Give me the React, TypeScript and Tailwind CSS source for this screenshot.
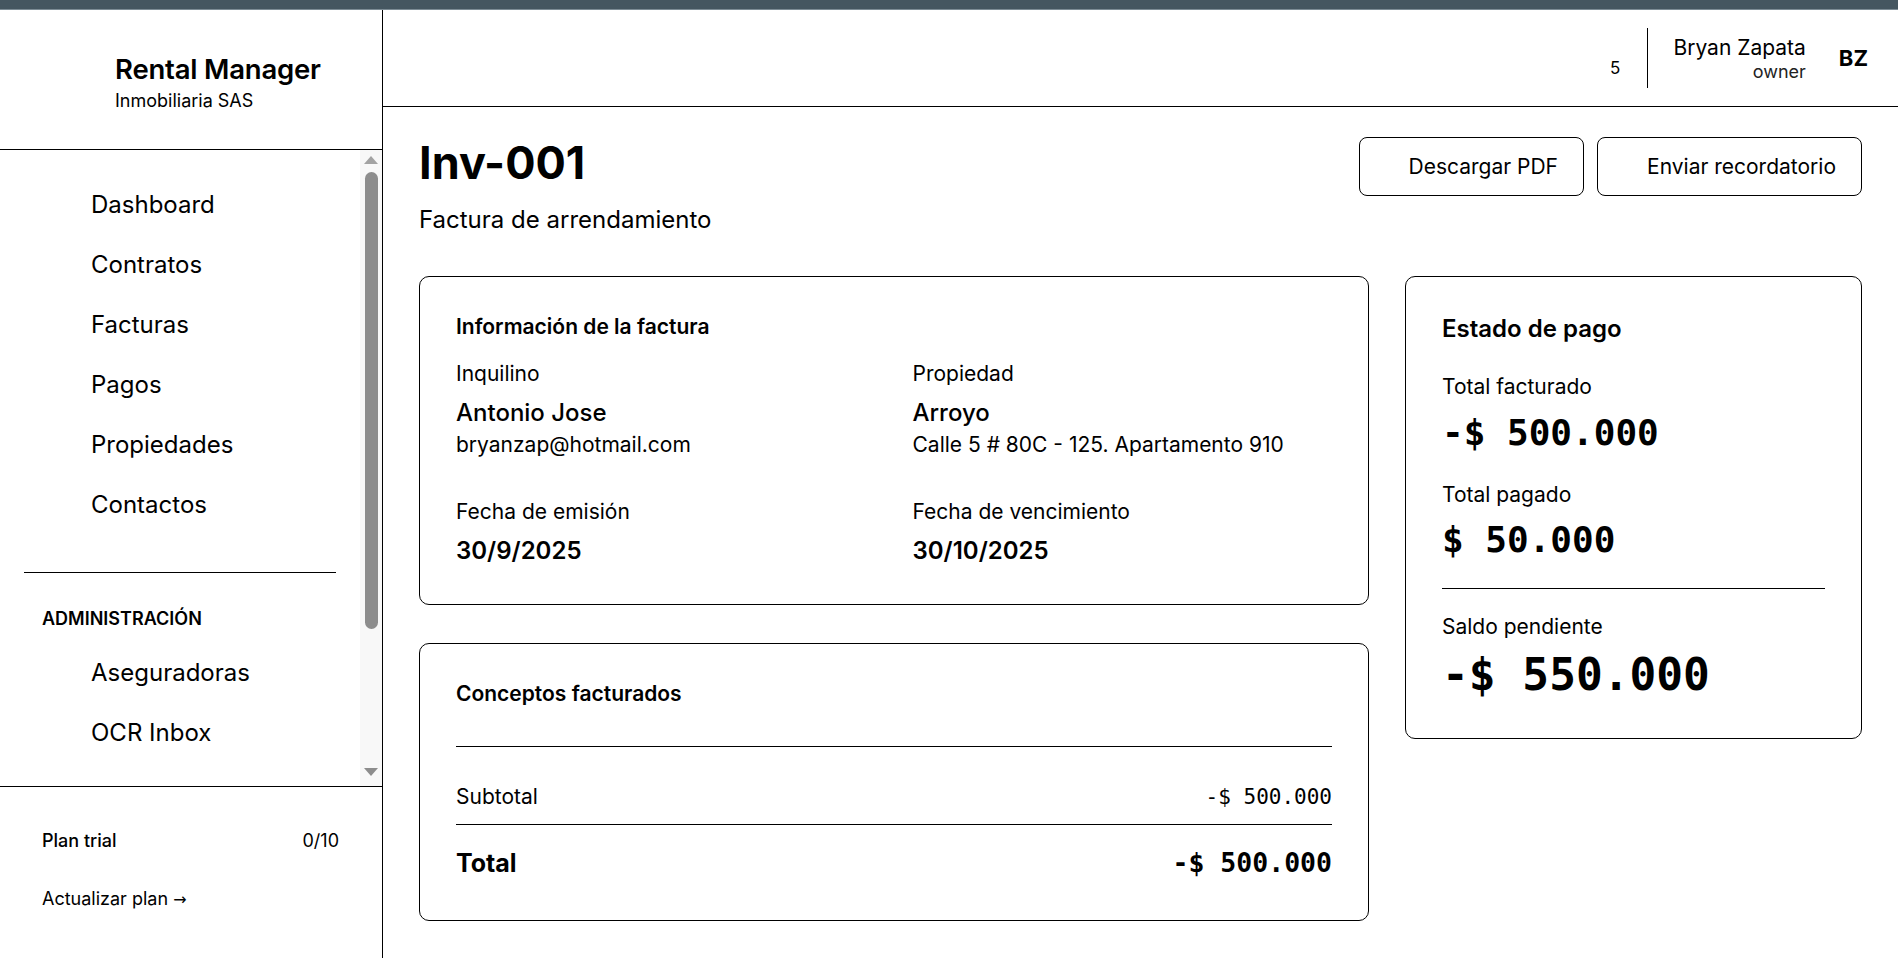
import React from 'react';

const navItems = ['Dashboard', 'Contratos', 'Facturas', 'Pagos', 'Propiedades', 'Contactos'];
const adminItems = ['Aseguradoras', 'OCR Inbox'];

const mono = "font-['DejaVu_Sans_Mono',monospace]";

const Sidebar: React.FC = () => {
  return (
    <aside className="w-[383px] shrink-0 border-r border-black flex flex-col">
      <div className="h-[140px] shrink-0 border-b border-black pl-[115px] pt-[41px]">
        <div className="text-[27.5px] font-semibold leading-[36px] tracking-[-0.2px]">Rental Manager</div>
        <div className="text-[18px] leading-[22px] mt-[3px]">Inmobiliaria SAS</div>
      </div>
      <div className="h-[637px] shrink-0 flex border-b border-black">
        <nav className="flex-1 pt-[25px]">
          {navItems.map((item) => (
            <a key={item} className="h-[60px] flex items-center pl-[91px] text-[24px]">
              {item}
            </a>
          ))}
          <div className="mx-[24px] mt-[37px] border-t border-black" />
          <div className="mt-[34px] pl-[42px] text-[18px] font-semibold leading-[24px]">ADMINISTRACIÓN</div>
          <div className="mt-[12px]">
            {adminItems.map((item) => (
              <a key={item} className="h-[60px] flex items-center pl-[91px] text-[24px]">
                {item}
              </a>
            ))}
          </div>
        </nav>
        {/* scrollbar */}
        <div className="w-[22px] bg-[#f8f8f8] flex flex-col items-center py-[6px]">
          <div className="w-0 h-0 border-l-[7px] border-r-[7px] border-b-[8px] border-l-transparent border-r-transparent border-b-[#a3a3a3]" />
          <div className="w-[13px] h-[457px] rounded-full bg-[#8d8d8d] mt-[8px]" />
          <div className="flex-1" />
          <div className="w-0 h-0 border-l-[7px] border-r-[7px] border-t-[8px] border-l-transparent border-r-transparent border-t-[#8d8d8d] mb-[4px]" />
        </div>
      </div>
      <div className="flex-1 px-[42px] pt-[42px] text-[18px]">
        <div className="flex justify-between leading-[24px]">
          <span className="font-medium">Plan trial</span>
          <span className="mr-[1px]">0/10</span>
        </div>
        <div className="mt-[34px] leading-[24px]">
          Actualizar plan <span className="font-['DejaVu_Sans',sans-serif] text-[16px]">→</span>
        </div>
      </div>
    </aside>
  );
};

const Header: React.FC = () => {
  return (
    <header className="h-[97px] shrink-0 border-b border-black flex items-center justify-end pr-[30px]">
      <span className="text-[17px] mt-[22px]">5</span>
      <div className="w-px h-[60px] bg-black ml-[27px] mr-[25px]" />
      <div className="text-right">
        <div className="text-[21px] leading-[27px]">Bryan Zapata</div>
        <div className="text-[18px] leading-[22px] text-[#222]">owner</div>
      </div>
      <div className="ml-[33px] text-[22px] font-bold">BZ</div>
    </header>
  );
};

const Label: React.FC<{ children: React.ReactNode }> = ({ children }) => (
  <div className="text-[21px] leading-[28px]">{children}</div>
);

const App: React.FC = () => {
  return (
    <div className="h-[958px] flex flex-col bg-white text-black font-['Inter',sans-serif] overflow-hidden">
      <div className="h-[10px] shrink-0 bg-[#455660] border-b border-[#7d8c95]" />
      <div className="flex flex-1 min-h-0">
        <Sidebar />
        <div className="flex-1 flex flex-col min-w-0">
          <Header />
          <main className="px-[36px] pt-[28px]">
            <div className="flex justify-between items-start">
              <div>
                <h1 className="text-[45px] font-bold leading-[56px]">Inv-001</h1>
                <p className="text-[24px] leading-[32px] mt-[13px]">Factura de arrendamiento</p>
              </div>
              <div className="flex gap-[13px] mt-[2px]">
                <button className="h-[59px] rounded-[8px] border border-black pl-[49px] pr-[25px] text-[21px]">
                  Descargar PDF
                </button>
                <button className="h-[59px] rounded-[8px] border border-black pl-[49px] pr-[25px] text-[21px]">
                  Enviar recordatorio
                </button>
              </div>
            </div>

            <div className="grid grid-cols-3 gap-x-[36px] mt-[40px] items-start">
              <div className="col-span-2 flex flex-col gap-[38px]">
                <section className="border border-black rounded-[10px] px-[36px] pt-[36px] pb-[37px]">
                  <h2 className="text-[21px] font-semibold leading-[28px]">Información de la factura</h2>
                  <div className="grid grid-cols-2 gap-x-[37px] mt-[19px]">
                    <div>
                      <Label>Inquilino</Label>
                      <div className="text-[24px] font-medium leading-[32px] mt-[9px]">Antonio Jose</div>
                      <div className="text-[21px] leading-[28px] mt-[2px]">bryanzap@hotmail.com</div>
                    </div>
                    <div>
                      <Label>Propiedad</Label>
                      <div className="text-[24px] font-medium leading-[32px] mt-[9px]">Arroyo</div>
                      <div className="text-[21px] leading-[28px] mt-[2px]">Calle 5 # 80C - 125. Apartamento 910</div>
                    </div>
                    <div className="mt-[39px]">
                      <Label>Fecha de emisión</Label>
                      <div className="text-[24px] font-semibold leading-[32px] mt-[9px]">30/9/2025</div>
                    </div>
                    <div className="mt-[39px]">
                      <Label>Fecha de vencimiento</Label>
                      <div className="text-[24px] font-semibold leading-[32px] mt-[9px]">30/10/2025</div>
                    </div>
                  </div>
                </section>

                <section className="border border-black rounded-[10px] px-[36px] pt-[36px] pb-[40px]">
                  <h2 className="text-[21px] font-semibold leading-[28px]">Conceptos facturados</h2>
                  <div className="border-t border-black mt-[38px]" />
                  <div className="flex justify-between items-center pt-[36px] pb-[13px] text-[21px] leading-[28px]">
                    <span>Subtotal</span>
                    <span className={`${mono} text-[21px]`}>-$ 500.000</span>
                  </div>
                  <div className="border-t border-black" />
                  <div className="flex justify-between items-center pt-[21px] font-bold">
                    <span className="text-[25px] leading-[34px]">Total</span>
                    <span className={`${mono} text-[26.5px] leading-[34px]`}>-$ 500.000</span>
                  </div>
                </section>
              </div>

              <section className="border border-black rounded-[10px] px-[36px] pt-[36px] pb-[37px]">
                <h2 className="text-[24px] font-semibold leading-[32px]">Estado de pago</h2>
                <div className="mt-[28px]">
                  <Label>Total facturado</Label>
                  <div className={`${mono} text-[36px] font-bold leading-[44px] mt-[10px]`}>-$ 500.000</div>
                </div>
                <div className="mt-[26px]">
                  <Label>Total pagado</Label>
                  <div className={`${mono} text-[36px] font-bold leading-[44px] mt-[9px]`}>$ 50.000</div>
                </div>
                <div className="border-t border-black mt-[26px]" />
                <div className="mt-[24px]">
                  <Label>Saldo pendiente</Label>
                  <div className={`${mono} text-[44.5px] font-bold leading-[52px] mt-[8px]`}>-$ 550.000</div>
                </div>
              </section>
            </div>
          </main>
        </div>
      </div>
    </div>
  );
};

export default App;
